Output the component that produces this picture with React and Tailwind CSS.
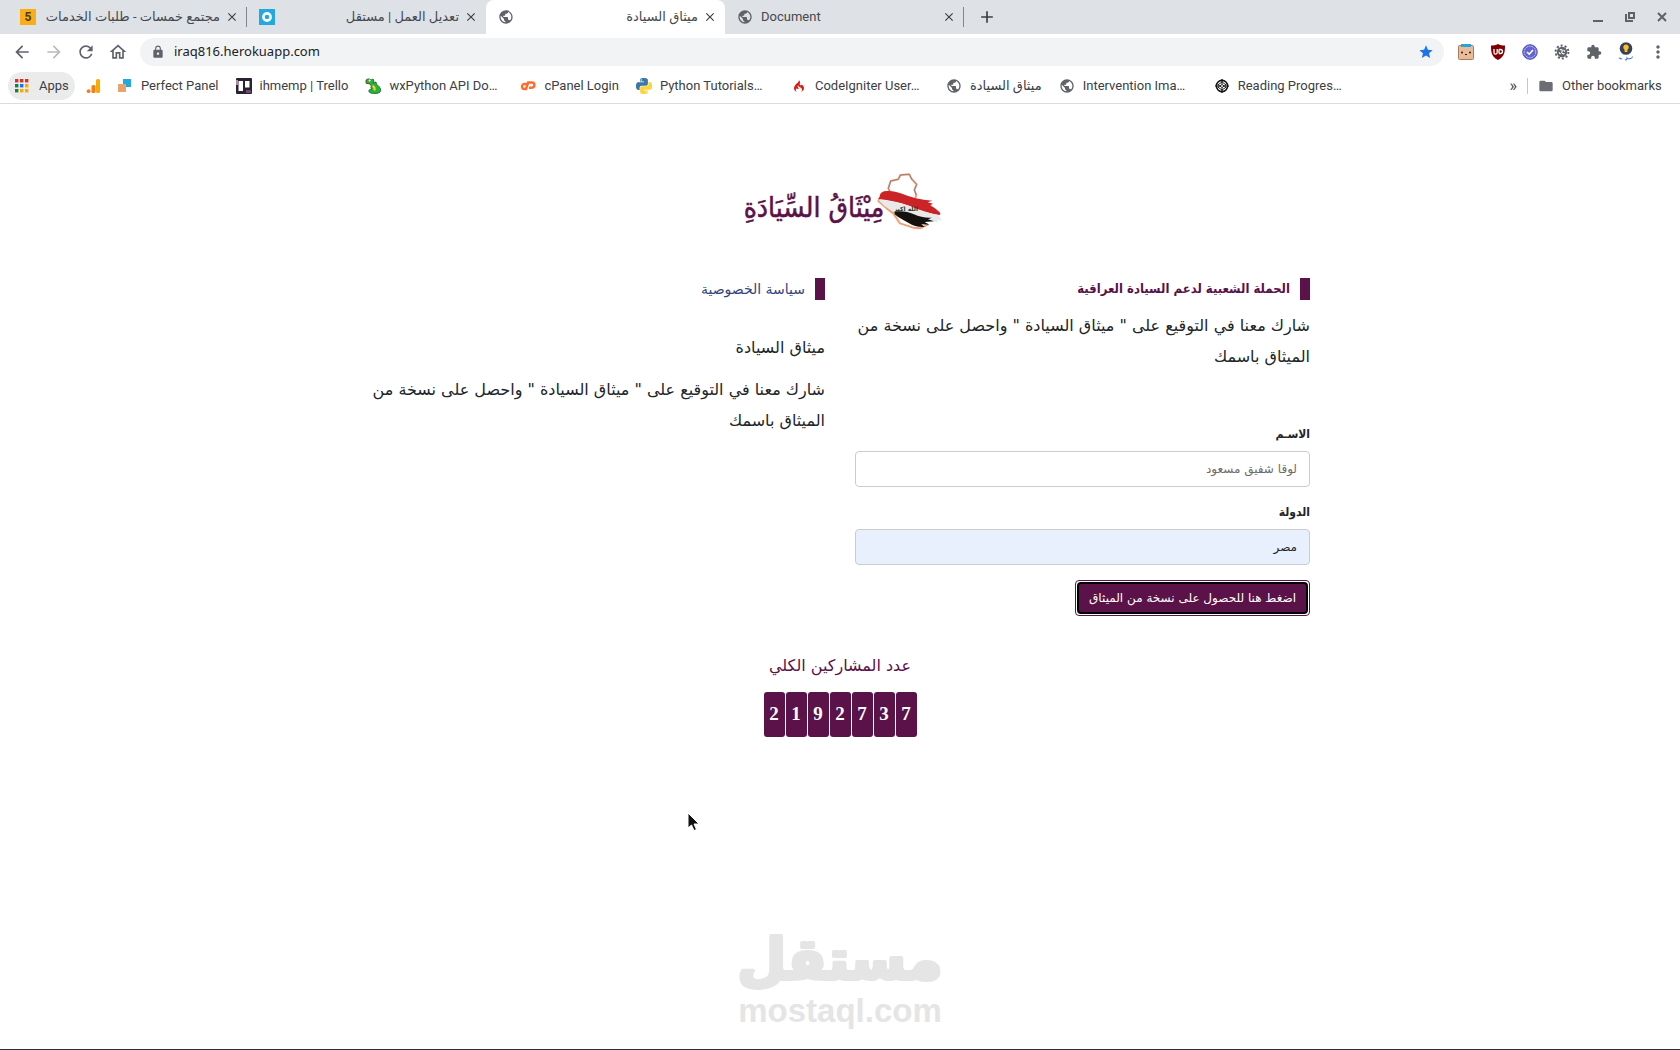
import React from 'react';
import {
  MdAdd,
  MdArrowBack,
  MdArrowForward,
  MdClose,
  MdExtension,
  MdFolder,
  MdLock,
  MdMoreVert,
  MdOutlineHome,
  MdPublic,
  MdRefresh,
  MdStar,
} from 'react-icons/md';
import { SiCodeigniter } from 'react-icons/si';

const tabs = [
  { id: 'khamsat', title: 'مجتمع خمسات - طلبات الخدمات', icon: <KhamsatIcon />, rtl: true },
  { id: 'mostaql', title: 'تعديل العمل | مستقل', icon: <MostaqlIcon />, rtl: true },
  { id: 'charter', title: 'ميثاق السيادة', icon: <Globe />, rtl: true, active: true },
  { id: 'document', title: 'Document', icon: <Globe /> },
];

const bookmarks = [
  { label: 'Perfect Panel', icon: <PanelIcon /> },
  { label: 'ihmemp | Trello', icon: <TrelloIcon /> },
  { label: 'wxPython API Do…', icon: <SnakeIcon />, cut: true },
  { label: 'cPanel Login', icon: <CpanelIcon /> },
  { label: 'Python Tutorials…', icon: <PythonIcon />, cut: true },
  { label: 'CodeIgniter User…', icon: <SiCodeigniter className="h-3 w-4 text-[#dd1b16]" />, cut: true },
  { label: 'ميثاق السيادة', icon: <Globe /> },
  { label: 'Intervention Ima…', icon: <Globe />, cut: true },
  { label: 'Reading Progres…', icon: <CodepenIcon />, cut: true },
];

const total = '2192737';

function Globe() {
  return <MdPublic className="h-4 w-4 text-[#5f6368]" />;
}

function KhamsatIcon() {
  return (
    <span className="flex h-4 w-4 items-center justify-center bg-[#f9ae17] text-xs leading-4 font-bold text-[#4a3a2a]">
      5
    </span>
  );
}

function MostaqlIcon() {
  return (
    <svg viewBox="0 0 16 16" className="h-4 w-4">
      <rect width="16" height="16" fill="#23a8e0" />
      <circle cx="8" cy="8" r="3.6" fill="none" stroke="#fff" strokeWidth="2.6" />
    </svg>
  );
}

function AppsIcon() {
  const colors = ['#d93025', '#d93025', '#d93025', '#188038', '#1a73e8', '#f9ab00', '#188038', '#f9ab00', '#f9ab00'];
  return (
    <svg viewBox="0 0 14 14" className="h-[14px] w-[14px]">
      {colors.map((color, i) => (
        <rect key={i} x={(i % 3) * 5} y={Math.floor(i / 3) * 5} width="3.4" height="3.4" fill={color} />
      ))}
    </svg>
  );
}

function AnalyticsIcon() {
  return (
    <svg viewBox="0 0 16 16" className="h-4 w-4">
      <rect x="10" y="1" width="4" height="14" rx="1.6" fill="#f9ab00" />
      <rect x="5.5" y="7" width="4" height="8" rx="1.6" fill="#ff7a1a" />
      <circle cx="2.6" cy="13.2" r="1.9" fill="#ff7a1a" />
    </svg>
  );
}

function PanelIcon() {
  return (
    <svg viewBox="0 0 16 16" className="h-4 w-4">
      <rect x="6" y="1" width="8" height="8" fill="#23a8e0" />
      <rect x="1" y="6" width="8" height="8" fill="#e9a36c" />
    </svg>
  );
}

function TrelloIcon() {
  return (
    <svg viewBox="0 0 16 16" className="h-4 w-4">
      <rect width="16" height="16" rx="1" fill="#2b2233" />
      <rect x="0" y="2" width="2" height="5" fill="#b58aa0" />
      <rect x="10" y="12" width="5" height="3" fill="#6b4a70" />
      <rect x="2.5" y="3" width="4.5" height="10" fill="#fff" />
      <rect x="9" y="3" width="4.5" height="6.5" fill="#fff" />
    </svg>
  );
}

function SnakeIcon() {
  return (
    <svg viewBox="0 0 16 16" className="h-4 w-4">
      <path
        d="M1 2c1.5-1.500 4-1.500 5 0L8 1l1 2-1 2 3-1 .5 2.500c2 1 4 3 4.300 6-.3 2-3 3.200-6 3-3.500 0-6-1-6-2.600 0-1.200 1.600-1.400 3-1.800-1-.8-1.200-2.200-.3-3.200L4.500 6 1 5z"
        fill="#26b53a"
        stroke="#155f22"
        strokeWidth=".8"
      />
      <path d="M7.5 8c1.500.5 2.500 2 2 4.500" stroke="#f6d623" strokeWidth="2" fill="none" />
      <path d="M1 5.200l4 .3" stroke="#d22" strokeWidth="1" />
      <circle cx="4.6" cy="2.6" r="1" fill="#fff" />
    </svg>
  );
}

function CpanelIcon() {
  return (
    <svg viewBox="0 0 16 16" className="h-4 w-4" fill="none" stroke="#ff6c2c" strokeWidth="2.4">
      <path d="M7.5 6H4.500a2.500 2.500 0 0 0 0 5h1.500l2.200-6.500h3.600a2.600 2.600 0 0 1 0 5.200H9" />
    </svg>
  );
}

function PythonIcon() {
  return (
    <svg viewBox="0 0 24 24" className="h-4 w-4">
      <path
        fill="#3b77a8"
        d="M14.25.18l.9.2.73.26.59.3.45.32.34.34.25.34.16.33.1.3.04.26.02.2-.01.13V8.5l-.05.63-.13.55-.21.46-.26.38-.3.31-.33.25-.35.19-.35.14-.33.1-.3.07-.26.04-.21.02H8.77l-.69.05-.59.14-.5.22-.41.27-.33.32-.27.35-.2.36-.15.37-.1.35-.07.32-.04.27-.02.21v3.06H3.17l-.21-.03-.28-.07-.32-.12-.35-.18-.36-.26-.36-.36-.35-.46-.32-.59-.28-.73-.21-.88-.14-1.05-.05-1.23.06-1.22.16-1.04.24-.87.32-.71.36-.57.4-.44.42-.33.42-.24.4-.16.36-.1.32-.05.24-.01h.16l.06.01h8.16v-.83H6.18l-.01-2.75-.02-.37.05-.34.11-.31.17-.28.25-.26.31-.23.38-.2.44-.18.51-.15.58-.12.64-.1.71-.06.77-.04.84-.02 1.27.05z"
      />
      <path
        fill="#ffd43b"
        d="M21.04 6.11l.28.06.32.12.35.18.36.27.36.35.35.47.32.59.28.73.21.88.14 1.04.05 1.23-.06 1.23-.16 1.04-.24.86-.32.71-.36.57-.4.45-.42.33-.42.24-.4.16-.36.09-.32.05-.24.02-.16-.01h-8.22v.82h5.84l.01 2.76.02.36-.05.34-.11.31-.17.29-.25.25-.31.24-.38.2-.44.17-.51.15-.58.13-.64.09-.71.07-.77.04-.84.01-1.27-.04-1.07-.14-.9-.2-.73-.25-.59-.3-.45-.33-.34-.34-.25-.34-.16-.33-.1-.3-.04-.25-.02-.2.01-.13v-5.34l.05-.64.13-.54.21-.46.26-.38.3-.32.33-.24.35-.2.35-.14.33-.1.3-.06.26-.04.21-.02.13-.01h5.84l.69-.05.59-.14.5-.21.41-.28.33-.32.27-.35.2-.36.15-.36.1-.35.07-.32.04-.28.02-.21V6.07h2.09z"
      />
      <circle cx="8" cy="3" r="1" fill="#fff" />
      <circle cx="16" cy="21" r="1" fill="#fff" />
    </svg>
  );
}

function CodepenIcon() {
  return (
    <svg viewBox="0 0 16 16" className="h-4 w-4" fill="none" stroke="#111">
      <circle cx="8" cy="8" r="5.6" strokeWidth="1.6" />
      <path
        d="M8 4l4 2.800v2.400L8 12 4 9.200V6.800zM8 4v2.500M8 9.500V12M4 6.800l4 2.700 4-2.700M4 9.200l4-2.700 4 2.700"
        strokeWidth=".9"
      />
      <path d="M8 1v3M8 12v3M1 8h2M13 8h2" strokeWidth="1.2" />
    </svg>
  );
}

function WindowControls() {
  return (
    <div className="ml-auto flex items-center gap-4 pr-[10px] text-[#5f6368]">
      <button type="button" aria-label="Minimize">
        <svg viewBox="0 0 16 16" className="h-4 w-4">
          <rect x="3" y="11" width="10" height="2" fill="currentColor" />
        </svg>
      </button>
      <button type="button" aria-label="Restore">
        <svg viewBox="0 0 16 16" className="h-4 w-4" fill="none" stroke="currentColor" strokeWidth="2">
          <path d="M7 4h5v5H7z" />
          <path d="M4 5v7h7" />
        </svg>
      </button>
      <button type="button" aria-label="Close window">
        <svg viewBox="0 0 16 16" className="h-4 w-4" stroke="currentColor" strokeWidth="2">
          <path d="M4 4l8 8M12 4l-8 8" />
        </svg>
      </button>
    </div>
  );
}

function Tab({ tab }) {
  const state = tab.active ? 'rounded-t-lg bg-white' : '';
  return (
    <div className={`flex w-[239px] items-center pr-2 pl-3 ${state}`}>
      <button type="button" className="flex min-w-0 flex-1 items-center gap-2">
        {tab.icon}
        <span
          dir={tab.rtl ? 'rtl' : 'ltr'}
          className="flex-1 overflow-hidden text-start text-[13px] leading-5 whitespace-nowrap text-[#45494d]"
        >
          {tab.title}
        </span>
      </button>
      <button type="button" aria-label={`Close ${tab.title}`} className="ml-[5px]">
        <MdClose className="h-[14px] w-[14px] text-[#3c4043]" />
      </button>
    </div>
  );
}

function TabStrip() {
  return (
    <div className="flex h-[34px] bg-[#dee1e6] pl-2">
      {tabs.map((tab, i) => (
        <React.Fragment key={tab.id}>
          <Tab tab={tab} />
          {(i === 0 || i === 3) && <span className="-ml-px h-5 w-px self-center bg-[#80868b]" />}
        </React.Fragment>
      ))}
      <button type="button" aria-label="New tab" className="ml-[13px]">
        <MdAdd className="h-5 w-5 text-[#3c4043]" />
      </button>
      <WindowControls />
    </div>
  );
}

function Extensions() {
  return (
    <div className="flex items-center gap-4 text-[#5f6368]">
      <button type="button" aria-label="Clipboard helper">
        <svg viewBox="0 0 16 16" className="h-4 w-4">
          <rect x="0.5" y="1.5" width="15" height="14" rx="1" fill="#eabb98" stroke="#a97c5c" />
          <path d="M3 0h10v3H3z" fill="#29a3dc" />
          <circle cx="4" cy="8.5" r="1" fill="#222" />
          <circle cx="12" cy="8.5" r="1" fill="#222" />
          <path d="M7 10.500h2" stroke="#222" strokeWidth="1.2" />
        </svg>
      </button>
      <button type="button" aria-label="uBlock">
        <svg viewBox="0 0 16 16" className="h-4 w-4">
          <path d="M8 0c2 1 4.500 1.500 7 1.500 0 7-.5 11-7 14.500C1.500 12.500 1 8.500 1 1.500 3.500 1.500 6 1 8 0z" fill="#800000" />
          <path d="M4 5v3.500a1.200 1.200 0 0 0 3.200 0V5M9 5.500v4M9 5.500h1.500a2 2 0 0 1 0 4H9" fill="none" stroke="#fff" strokeWidth="1.3" />
        </svg>
      </button>
      <button type="button" aria-label="Checker">
        <svg viewBox="0 0 16 16" className="h-4 w-4">
          <circle cx="8" cy="8" r="7.3" fill="#6466cf" stroke="#5457c5" />
          <circle cx="8" cy="8" r="5.8" fill="none" stroke="#c9caf2" strokeWidth=".9" strokeDasharray="2 .8" />
          <path d="M5 8l2.200 2.200L11 6" fill="none" stroke="#fff" strokeWidth="1.6" />
        </svg>
      </button>
      <button type="button" aria-label="Debugger">
        <svg viewBox="0 0 16 16" className="h-4 w-4">
          <circle cx="8" cy="8" r="5.2" fill="currentColor" />
          <circle cx="8" cy="8" r="6.4" fill="none" stroke="currentColor" strokeWidth="2" strokeDasharray="2 2" />
          <path d="M6 6c1-1 3 0 2 1.500s1 3 2.500 2M6.500 10L5 8.500M9.500 6L11 7.500" fill="none" stroke="#fff" strokeWidth="1.1" />
        </svg>
      </button>
      <button type="button" aria-label="Extensions">
        <MdExtension className="h-4 w-4" />
      </button>
      <button type="button" aria-label="Profile">
        <svg viewBox="0 0 16 20" className="h-5 w-4">
          <circle cx="8" cy="6.5" r="6.3" fill="#3a4356" />
          <path d="M8 2.500a2.800 2.800 0 0 1 1.400 5.200V10H6.600V7.700A2.800 2.800 0 0 1 8 2.500z" fill="#fbc02d" />
          <path d="M1 16.500c1-1.500 2 1.500 3 0M7 17.500c1 1.500 2-.5 2-1.500 1 1.500 2 .5 3 .5s2 .5 2.500-2" fill="none" stroke="#3f77c9" strokeWidth="1.1" />
        </svg>
      </button>
      <button type="button" aria-label="Menu">
        <MdMoreVert className="h-5 w-5 -mx-[2px]" />
      </button>
    </div>
  );
}

function Toolbar() {
  return (
    <div className="flex h-9 items-center gap-[14px] pr-[14px] pl-3 text-[#5f6368]">
      <div className="flex items-center gap-3">
        <button type="button" aria-label="Back">
          <MdArrowBack className="h-5 w-5" />
        </button>
        <button type="button" aria-label="Forward">
          <MdArrowForward className="h-5 w-5 text-[#b9bbbe]" />
        </button>
        <button type="button" aria-label="Reload">
          <MdRefresh className="h-5 w-5" />
        </button>
        <button type="button" aria-label="Home">
          <MdOutlineHome className="h-5 w-5" />
        </button>
      </div>
      <label className="-ml-[2px] flex h-7 flex-1 items-center rounded-full bg-[#f1f3f4] pr-[10px] pl-[11px]">
        <MdLock className="h-[14px] w-[14px]" />
        <input
          type="text"
          aria-label="Address"
          defaultValue="iraq816.herokuapp.com"
          className="ml-[9px] flex-1 bg-transparent font-['Noto_Sans',sans-serif] text-[13px] text-[#202124] outline-none"
        />
        <MdStar className="h-4 w-4 text-[#1a73e8]" />
      </label>
      <Extensions />
    </div>
  );
}

function BookmarksBar() {
  return (
    <nav className="flex h-[34px] items-center border-b border-[#dadce0] pr-[14px] pb-[2px] pl-2 text-[13px] whitespace-nowrap text-[#3c4043]">
      <a href="#apps" className="flex h-7 w-[67px] items-center gap-[10px] rounded-full bg-[#ebebeb] pl-[7px]">
        <AppsIcon />
        Apps
      </a>
      <a href="#analytics" aria-label="Analytics" className="ml-[11px]">
        <AnalyticsIcon />
      </a>
      <div className="ml-[15px] flex min-w-0 flex-1 gap-[17px] overflow-hidden">
        {bookmarks.map((item) => (
          <a key={item.label} href="#bookmark" className="flex shrink-0 items-center gap-2">
            {item.icon}
            <span className={item.cut ? 'w-[114px]' : ''}>{item.label}</span>
          </a>
        ))}
      </div>
      <button type="button" aria-label="More bookmarks" className="text-base">
        »
      </button>
      <span className="mx-[10px] h-4 w-px bg-[#c4c7cb]" />
      <a href="#other" className="flex items-center gap-2">
        <MdFolder className="h-4 w-4 text-[#6b6f73]" />
        <span className="w-[104px]">Other bookmarks</span>
      </a>
    </nav>
  );
}

function BrandLogo() {
  return (
    <svg viewBox="0 0 220 80" className="h-20 w-[220px]" role="img" aria-label="ميثاق السيادة">
      <g transform="translate(140 5) scale(.3333)">
        <path
          d="M62 84l-7-14 7-22 23-5 6-13 27-2 7 14 15 16-7 17 6 15-4 12M36 84l-11 24 25 22 20 15 20 30 40 13 20 2 25-12"
          fill="none"
          stroke="#f0a078"
          strokeWidth="6"
          strokeLinejoin="round"
        />
        <path d="M62 84l-7-14 7-22 23-5 6-13 27-2 7 14 15 16-7 17 6 15" fill="none" stroke="#6d6f86" strokeWidth="2" />
        <path
          d="M26 102c-1-2 1-5 4-7-2-6 3-12 12-16 22-3 36 1 50 6 30 12 60 20 95 22l-14 5 16 4-8 5 14 9 14 12c4 5 2 8-2 8-30-6-60-14-90-28-30-10-60-17-91-20z"
          fill="#cc2426"
        />
        <path
          d="M26 104c30 2 60 8 91 18 30 13 60 22 88 28l12 18-16-4 4 8-20-4c-16-2-30-10-52-20-20-8-38-10-58-8-20-8-36-18-49-36z"
          fill="#e9e9ea"
        />
        <path
          d="M74 140c22-3 40 0 58 8 16 7 32 11 54 10l-12 5 18 6-28 2 14 8-24-1 10 8c-20 1-34-3-48-12-14-8-28-14-42-26z"
          fill="#14110f"
        />
      </g>
      <text
        x="84"
        y="57"
        textAnchor="middle"
        direction="rtl"
        fill="#5b1248"
        stroke="#5b1248"
        strokeWidth=".5"
        className="font-['DejaVu_Sans_Condensed','DejaVu_Sans',sans-serif] text-[28px]"
      >
        مِيْثَاقُ السِّيَادَةِ
      </text>
      <text
        x="176"
        y="51"
        textAnchor="middle"
        direction="rtl"
        fill="#1d3a2a"
        className="font-['DejaVu_Sans',sans-serif] text-[6px] font-bold"
      >
        الله اكبر
      </text>
    </svg>
  );
}

function SectionTitle({ children, className }) {
  return (
    <h2 className={`border-r-[10px] border-[#5b1248] pr-[10px] leading-[22px] ${className}`}>
      {children}
    </h2>
  );
}

function Pitch() {
  return <p className="text-base leading-[31px]">شارك معنا في التوقيع على " ميثاق السيادة " واحصل على نسخة من الميثاق باسمك</p>;
}

function SignForm() {
  return (
    <form className="mt-[52px] flex flex-col text-xs" onSubmit={(e) => e.preventDefault()}>
      <label htmlFor="name" className="mb-[7px] font-['DejaVu_Sans_Condensed'] leading-5 font-bold">
        الاسـم
      </label>
      <input
        id="name"
        type="text"
        placeholder="لوقا شفيق مسعود"
        className="h-9 rounded border border-[#ccc] px-3 placeholder:text-[#6c6c6c]"
      />
      <label htmlFor="country" className="mt-[15px] mb-[7px] font-['DejaVu_Sans_Condensed'] leading-5 font-bold">
        الدولة
      </label>
      <input
        id="country"
        type="text"
        defaultValue="مصر"
        className="h-9 rounded border border-[#ccc] bg-[#e8f0fe] px-3"
      />
      <button
        type="submit"
        className="mt-[15px] h-9 self-start rounded border border-[#5b1248] bg-white p-px text-white"
      >
        <span className="flex h-full items-center rounded-sm border-2 border-black bg-[#5b1248] px-[10px]">
          اضغط هنا للحصول على نسخة من الميثاق
        </span>
      </button>
    </form>
  );
}

function Counter() {
  return (
    <section className="mt-8 flex flex-col items-center">
      <h2 className="text-base leading-9 text-[#5b1248]">عدد المشاركين الكلي</h2>
      <div dir="ltr" className="mt-2 flex gap-px font-['Liberation_Serif',serif] text-[19px] font-bold text-white">
        {total.split('').map((digit, i) => (
          <span key={i} className="flex h-[45px] w-[21px] items-center justify-center rounded-[3px] bg-[#5b1248]">
            {digit}
          </span>
        ))}
      </div>
    </section>
  );
}

function Watermark() {
  return (
    <svg viewBox="0 0 240 130" className="mx-auto mt-auto h-[130px] w-60" fill="#e5e5e5">
      <text
        x="120"
        y="60"
        textAnchor="middle"
        direction="rtl"
        stroke="#e5e5e5"
        strokeWidth="4"
        strokeLinejoin="round"
        className="font-['DejaVu_Sans',sans-serif] text-[56px] font-bold"
      >
        مستقل
      </text>
      <text x="120" y="103" textAnchor="middle" className="font-['Liberation_Sans',sans-serif] text-[33px] font-bold">
        mostaql.com
      </text>
    </svg>
  );
}

function Pointer() {
  return (
    <svg viewBox="0 0 14 20" className="absolute top-[812px] left-[687px] h-5 w-[14px]">
      <path d="M1 1v15l3.500-3 2.500 5.500 2.500-1-2.500-5.500h5z" fill="#111" stroke="#fff" />
    </svg>
  );
}

function App() {
  return (
    <div className="relative flex min-h-screen flex-col border-b border-[#2d2d33] bg-white">
      <header className="font-['Roboto','DejaVu_Sans',sans-serif]">
        <TabStrip />
        <Toolbar />
        <BookmarksBar />
      </header>

      <main dir="rtl" className="flex flex-1 flex-col pt-14 font-['DejaVu_Sans',sans-serif] text-[#212529]">
        <div className="flex justify-center">
          <BrandLogo />
        </div>

        <div className="mx-auto mt-[38px] flex w-full max-w-[970px]">
          <section className="w-1/2 px-[15px]">
            <SectionTitle className="mb-[10px] font-['DejaVu_Sans_Condensed'] text-[13px] font-bold text-[#5b1248]">
              الحملة الشعبية لدعم السيادة العراقية
            </SectionTitle>
            <Pitch />
            <SignForm />
          </section>

          <section className="w-1/2 px-[15px]">
            <SectionTitle className="mb-8 text-sm text-[#34457a]">
              <a href="#privacy">سياسة الخصوصية</a>
            </SectionTitle>
            <p className="mb-[11px] text-base leading-[31px]">ميثاق السيادة</p>
            <Pitch />
          </section>
        </div>

        <Counter />
        <Watermark />
      </main>

      <Pointer />
    </div>
  );
}

export default App;
